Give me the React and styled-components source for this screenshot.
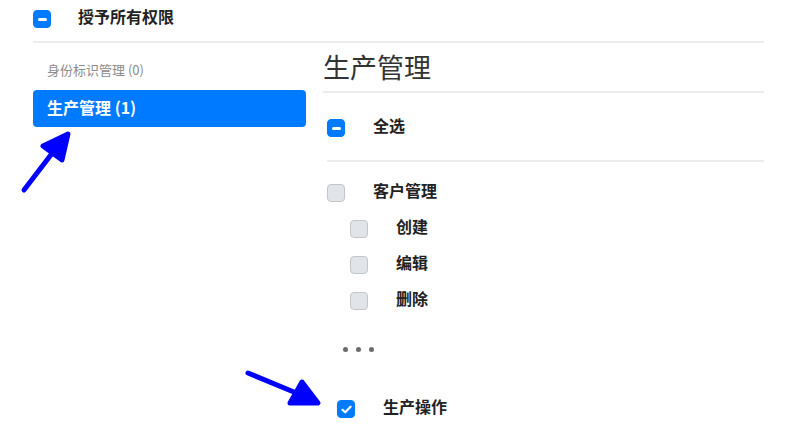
import React from "react";
import styled, { createGlobalStyle } from "styled-components";

const Global = createGlobalStyle`
  html, body { margin: 0; padding: 0; background: #fff; }
  body { font-family: "Noto Sans CJK SC", "Noto Sans", sans-serif; color: #212529; }
  * { box-sizing: border-box; }
`;

const Page = styled.div`
  position: relative;
  width: 801px;
  height: 433px;
  overflow: hidden;
  padding: 0 37px 0 33px;
`;

const Header = styled.div`
  display: flex;
  align-items: center;
  gap: 27px;
  padding: 10px 0 13px;
  border-bottom: 2px solid #ececec;
`;

const Label = styled.span`
  font-size: ${(p) => p.$size || 15}px;
  font-weight: 700;
  color: #222;
  line-height: 18px;
  margin: -3px 0 3px;
  white-space: nowrap;
`;

const Body = styled.div`
  display: grid;
  grid-template-columns: 273px 1fr;
  column-gap: 17px;
`;

const Side = styled.div`
  display: flex;
  flex-direction: column;
  padding-top: 10px;
`;

const SideItem = styled.div`
  height: 37px;
  display: flex;
  align-items: center;
  padding: 0 0 4px 14px;
  border-radius: 4px;
  background: ${(p) => (p.$active ? "#007bff" : "transparent")};
  color: ${(p) => (p.$active ? "#fff" : "#8a8a8a")};
  font-size: ${(p) => (p.$active ? 16 : 13)}px;
  font-weight: ${(p) => (p.$active ? 700 : 400)};
`;

const Main = styled.div`
  display: flex;
  flex-direction: column;
`;

const Title = styled.h2`
  margin: 0;
  height: 50px;
  line-height: 48px;
  font-size: 27px;
  font-weight: 400;
  color: #333;
  border-bottom: 2px solid #ececec;
`;

const List = styled.div`
  display: flex;
  flex-direction: column;
  padding-left: 4px;
`;

const AllRow = styled.div`
  display: flex;
  align-items: center;
  gap: 28px;
  padding: 26px 0 23px;
  border-bottom: 2px solid #ececec;
`;

const Rows = styled.div`
  display: flex;
  flex-direction: column;
  padding-top: 13px;
`;

const Row = styled.div`
  display: flex;
  align-items: center;
  gap: 28px;
  height: ${(p) => p.$h || 36}px;
  padding-left: ${(p) => p.$indent || 0}px;
`;

const Box = styled.span`
  flex: none;
  width: 18px;
  height: 18px;
  border-radius: 4px;
  display: inline-flex;
  align-items: center;
  justify-content: center;
  background: ${(p) => (p.$state === "off" ? "#e1e4e8" : "#007bff")};
  border: 1px solid ${(p) => (p.$state === "off" ? "#c2c6cb" : "#007bff")};
`;

const Minus = styled.span`
  width: 9px;
  height: 3px;
  border-radius: 1.5px;
  background: #fff;
`;

const Dots = styled.div`
  display: flex;
  align-items: center;
  gap: 8px;
  height: 60px;
  padding-left: 16px;
`;

const Dot = styled.span`
  width: 5px;
  height: 5px;
  border-radius: 50%;
  background: #6b6b6b;
`;

const Overlay = styled.svg`
  position: absolute;
  left: 0;
  top: 0;
  pointer-events: none;
`;

function Check({ state }) {
  return (
    <Box $state={state}>
      {state === "mixed" && <Minus />}
      {state === "on" && (
        <svg width="11" height="9" viewBox="0 0 11 9">
          <path d="M1.5 4.8 L4.2 7.3 L9.5 1.7" fill="none" stroke="#fff" strokeWidth="2.2" strokeLinecap="round" strokeLinejoin="round" />
        </svg>
      )}
    </Box>
  );
}

export default function App() {
  return (
    <>
      <Global />
      <Page>
        <Header>
          <Check state="mixed" />
          <Label $size={16}>授予所有权限</Label>
        </Header>
        <Body>
          <Side>
            <SideItem>身份标识管理 (0)</SideItem>
            <SideItem $active>生产管理 (1)</SideItem>
          </Side>
          <Main>
            <Title>生产管理</Title>
            <List>
              <AllRow>
                <Check state="mixed" />
                <Label $size={16}>全选</Label>
              </AllRow>
              <Rows>
                <Row>
                  <Check state="off" />
                  <Label $size={16}>客户管理</Label>
                </Row>
                <Row $indent={23}>
                  <Check state="off" />
                  <Label $size={16}>创建</Label>
                </Row>
                <Row $indent={23}>
                  <Check state="off" />
                  <Label $size={16}>编辑</Label>
                </Row>
                <Row $indent={23}>
                  <Check state="off" />
                  <Label $size={16}>删除</Label>
                </Row>
                <Dots>
                  <Dot />
                  <Dot />
                  <Dot />
                </Dots>
                <Row $h={60} $indent={10}>
                  <Check state="on" />
                  <Label $size={16}>生产操作</Label>
                </Row>
              </Rows>
            </List>
          </Main>
        </Body>
        <Overlay width="801" height="433" viewBox="0 0 801 433">
          <g stroke="#0000ff" strokeWidth="5" strokeLinecap="round" strokeLinejoin="round" fill="#0000ff">
            <line x1="24" y1="190" x2="60" y2="143" />
            <polygon points="43,146 68,134 62,160" />
            <line x1="248" y1="373" x2="306" y2="397" />
            <polygon points="302,382 318,403 290,403" />
          </g>
        </Overlay>
      </Page>
    </>
  );
}
